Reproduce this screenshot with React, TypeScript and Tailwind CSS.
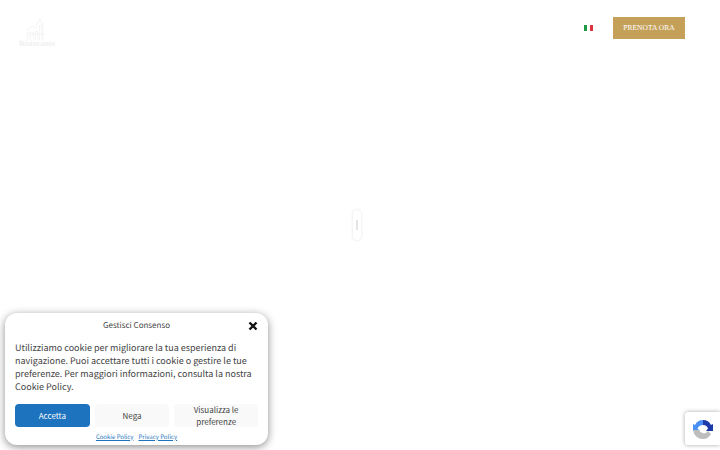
const sans = "font-['Noto_Sans_CJK_SC','Noto_Sans',sans-serif] [text-rendering:geometricPrecision]";

function Logo() {
  return (
    <div className="flex w-[40px] flex-col items-center">
      <svg width="24" height="24" viewBox="0 0 24 28" fill="none" stroke="#f2f2f2" strokeWidth="1">
        <path d="M1 27V15l6-5 4 3V8h2V5h2V2l2 3v3h2v19" />
        <path d="M4 27v-9h4v9M10 27V17h3v10M15 27V10h3v17" />
        <path d="M1 20h20" />
      </svg>
      <span className="mt-[-1px] font-['Liberation_Serif',serif] text-[8px] leading-[8px] font-bold text-[#efefef] [text-rendering:geometricPrecision]">
        Ristorante
      </span>
    </div>
  );
}

function ItalianFlag() {
  return (
    <div className="flex h-[6px] w-[9px]">
      <div className="flex-1 bg-[#1f9a44]" />
      <div className="flex-1 bg-white" />
      <div className="flex-1 bg-[#d9343c]" />
    </div>
  );
}

function CookieBanner() {
  return (
    <div className={`absolute top-[313px] left-[5px] w-[263px] rounded-xl bg-white px-[10px] pt-[6px] text-[#444] shadow-[0_2px_8px_rgba(0,0,0,0.45)] ${sans}`}>
      <div className="relative flex h-[14px] items-center justify-center text-[8px]">
        <span>Gestisci Consenso</span>
        <svg
          className="absolute top-[2px] right-0"
          width="10"
          height="10"
          viewBox="0 0 10 10"
          stroke="#111"
          strokeWidth="2.4"
        >
          <path d="M1.500 1.500l7 7M8.500 1.500l-7 7" />
        </svg>
      </div>
      <p className="mt-[8px] h-[52px] text-[9px] leading-[13px]">
        Utilizziamo cookie per migliorare la tua esperienza di navigazione. Puoi accettare tutti i
        cookie o gestire le tue preferenze. Per maggiori informazioni, consulta la nostra Cookie
        Policy.
      </p>
      <div className="mt-[11px] flex gap-[5px] text-[8px]">
        <button className="h-[23px] w-[75px] rounded-[4px] bg-[#1e73be] text-white">Accetta</button>
        <button className="h-[23px] w-[75px] rounded-[4px] bg-[#f9f9f9]">Nega</button>
        <button className="h-[23px] w-[84px] rounded-[4px] bg-[#f9f9f9]">Visualizza le preferenze</button>
      </div>
      <div className="flex h-[18px] items-center justify-center gap-[5px] text-[6px] text-[#1e73be]">
        <a className="underline">Cookie Policy</a>
        <a className="underline">Privacy Policy</a>
      </div>
    </div>
  );
}

function RecaptchaBadge() {
  return (
    <div className="absolute top-[412px] left-[685px] flex h-[33px] w-[35px] items-center justify-center rounded-l-[3px] bg-white shadow-[0_0_4px_rgba(0,0,0,0.35)]">
      <svg width="22" height="24" viewBox="0 0 22 22" fill="none">
        <path d="M11 2a9 9 0 0 1 8 5l2-1v7h-7l2-2.500a5 5 0 0 0-5-3.500z" fill="#1c3aa9" />
        <path d="M11 2a9 9 0 0 0-8 5l-2-1v7l7-0-2.500-2.500A6 6 0 0 1 11 7z" fill="#4a90f5" />
        <path d="M1 12h6a5 5 0 0 0 9 1l3 3a9 9 0 0 1-8 5 10 10 0 0 1-10-9z" fill="#bdbdbd" />
      </svg>
    </div>
  );
}

export default function App() {
  return (
    <div className="relative h-[450px] w-[720px] overflow-hidden bg-white">
      <header className="flex h-[56px] items-start pt-[17px] pr-[35px] pl-[17px]">
        <Logo />
        <div className="ml-auto flex h-[22px] items-center gap-[20px]">
          <ItalianFlag />
          <a className="flex h-[22px] w-[72px] items-center justify-center bg-[#c5a059] font-['Liberation_Serif',serif] text-[7.5px] text-white [text-rendering:geometricPrecision]">
            PRENOTA ORA
          </a>
        </div>
      </header>

      <div className="absolute top-[210px] left-[353px] flex h-[30px] w-[8px] items-center justify-center rounded-full bg-white shadow-[0_0_3px_rgba(0,0,0,0.12)]">
        <div className="h-[10px] w-[2px] bg-[#e4e4e4]" />
      </div>

      <CookieBanner />
      <RecaptchaBadge />
    </div>
  );
}
